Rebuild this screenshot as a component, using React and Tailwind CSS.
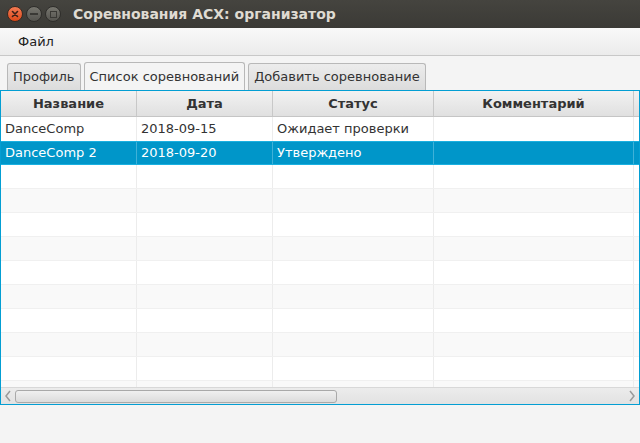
import React from 'react'

const cols = [
  { title: 'Название', w: 'w-[136px]' },
  { title: 'Дата', w: 'w-[136px]' },
  { title: 'Статус', w: 'w-[161px]' },
  { title: 'Комментарий', w: 'w-[200px]' },
]

const rows = [
  ['DanceComp', '2018-09-15', 'Ожидает проверки', ''],
  ['DanceComp 2', '2018-09-20', 'Утверждено', ''],
]

function WinButton({ kind }) {
  if (kind === 'close') {
    return (
      <div className="flex h-[16px] w-[16px] items-center justify-center rounded-full border border-[#3a2a22] bg-gradient-to-b from-[#f37a52] to-[#dd4814]">
        <svg width="8" height="8" viewBox="0 0 8 8">
          <path d="M1.5 1.5 L6.5 6.5 M6.5 1.5 L1.5 6.5" stroke="#3b2018" strokeWidth="1.6" strokeLinecap="round" />
        </svg>
      </div>
    )
  }
  return (
    <div className="flex h-[16px] w-[16px] items-center justify-center rounded-full border border-[#2f2e2b] bg-gradient-to-b from-[#77766f] to-[#55544f]">
      {kind === 'min' ? (
        <div className="h-[2px] w-[8px] bg-[#3a3935]" />
      ) : (
        <div className="h-[7px] w-[7px] border-[1.5px] border-[#3a3935]" />
      )}
    </div>
  )
}

export default function App() {
  const empty = Array.from({ length: 10 })
  return (
    <div className="flex h-[443px] w-[640px] flex-col overflow-hidden bg-[#f4f4f4] font-['DejaVu_Sans',sans-serif] text-[13px] text-[#333]">
      {/* title bar */}
      <div className="flex h-[28px] items-center bg-gradient-to-b from-[#45443f] to-[#3b3a36] pl-[7px]">
        <div className="flex items-center gap-[3px]">
          <WinButton kind="close" />
          <WinButton kind="min" />
          <WinButton kind="max" />
        </div>
        <div className="ml-[12px] text-[14px] font-bold text-[#dfdbd2]">Соревнования ACX: организатор</div>
      </div>

      {/* menu */}
      <div className="flex h-[28px] items-center border-b border-[#c8c8c8] bg-gradient-to-b from-[#f9f9f9] to-[#ebebeb] px-[18px]">
        <span className="text-[#222]">Файл</span>
      </div>

      {/* tabs */}
      <div className="mt-[6px] flex h-[28px] items-end gap-[3px] pl-[7px]">
        <div className="flex h-[27px] items-center rounded-t-[3px] border border-b-0 border-[#b8b8b8] bg-gradient-to-b from-[#ececec] to-[#dcdcdc] px-[5px] text-[#333]">
          Профиль
        </div>
        <div className="flex h-[28px] items-center rounded-t-[3px] border border-b-0 border-[#b8b8b8] bg-[#f4f4f4] px-[5px] text-[#333]">
          Список соревнований
        </div>
        <div className="flex h-[27px] items-center rounded-t-[3px] border border-b-0 border-[#b8b8b8] bg-gradient-to-b from-[#ececec] to-[#dcdcdc] px-[5px] text-[#333]">
          Добавить соревнование
        </div>
      </div>

      {/* table */}
      <div className="flex h-[315px] flex-col border border-[#039ed3] bg-white">
        <div className="flex h-[26px] border-b border-[#c5c5c5] bg-gradient-to-b from-[#f2f2f2] to-[#e0e0e0]">
          {cols.map((c) => (
            <div
              key={c.title}
              className={`${c.w} flex items-center justify-center border-r border-[#c8c8c8] font-bold text-[#333]`}
            >
              {c.title}
            </div>
          ))}
          <div className="flex-1" />
        </div>
        <div className="flex-1 overflow-hidden">
          {rows.map((r, i) => {
            const sel = i === 1
            return (
              <div
                key={i}
                className={`flex h-[24px] ${sel ? 'bg-[#0096c9] text-white' : 'bg-white text-[#333]'} ${sel ? 'border-y border-[#1ab0e0]' : ''}`}
              >
                {cols.map((c, j) => (
                  <div
                    key={j}
                    className={`${c.w} flex items-center border-r px-[4px] ${sel ? 'border-[#3fb1d8]' : 'border-[#ececec]'}`}
                  >
                    {r[j]}
                  </div>
                ))}
                <div className="flex-1" />
              </div>
            )
          })}
          {empty.map((_, i) => (
            <div key={i} className={`flex h-[24px] border-b border-[#f0f0f0] ${i % 2 === 0 ? 'bg-white' : 'bg-[#f9f9f9]'}`}>
              {cols.map((c, j) => (
                <div key={j} className={`${c.w} border-r border-[#ececec]`} />
              ))}
              <div className="flex-1" />
            </div>
          ))}
        </div>
        {/* horizontal scrollbar */}
        <div className="flex h-[17px] items-center border-t border-[#d8d8d8] bg-gradient-to-b from-[#ececec] to-[#e2e2e2] px-[2px]">
          <svg width="10" height="12" viewBox="0 0 10 12">
            <path d="M7 1 L3 6 L7 11" stroke="#9a9a9a" strokeWidth="1.5" fill="none" />
          </svg>
          <div className="ml-[2px] h-[13px] w-[322px] rounded-[3px] border border-[#a9a9a9] bg-gradient-to-b from-[#f0f0f0] to-[#dcdcdc]" />
          <div className="flex-1" />
          <svg width="10" height="12" viewBox="0 0 10 12">
            <path d="M3 1 L7 6 L3 11" stroke="#9a9a9a" strokeWidth="1.5" fill="none" />
          </svg>
        </div>
      </div>
    </div>
  )
}
